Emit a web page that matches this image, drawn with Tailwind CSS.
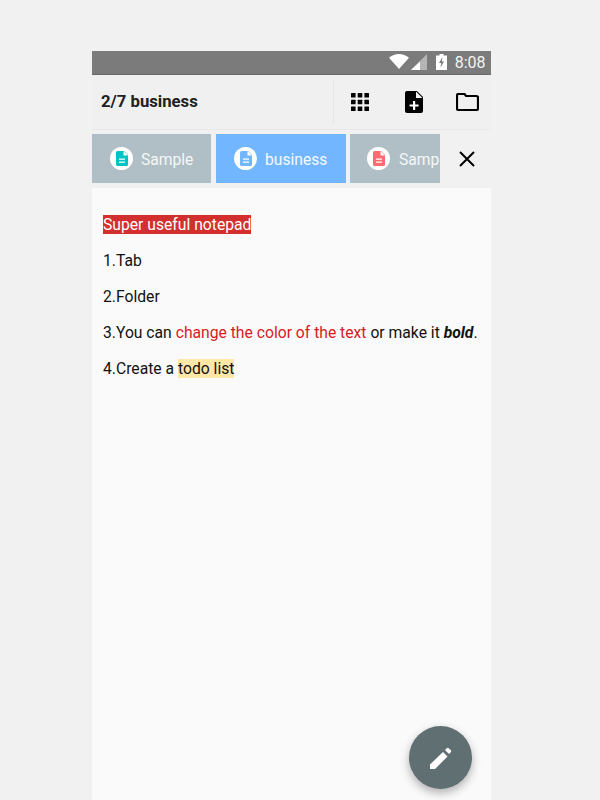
<!DOCTYPE html>
<html lang="en">
<head>
  <meta charset="UTF-8">
  <title>Notepad</title>
  <script src="https://cdn.jsdelivr.net/npm/@tailwindcss/browser@4"></script>
</head>
<body class="bg-[#f1f1f1] h-[800px] overflow-hidden font-['Roboto',sans-serif]">
  <div class="ml-[92px] mt-[51px] w-[399px] h-[749px] flex flex-col relative">

    <!-- status bar -->
    <div class="h-[24px] bg-[#7b7b7b] border-b border-[#6a6a6a] flex items-center justify-end text-white">
      <svg class="w-[20px] h-[15px] mb-[2px]" viewBox="0 0 20 15"><path d="M0 3.700C2.800 1.400 6.200 0 10 0s7.200 1.400 10 3.700L10 15z" fill="#fff"/></svg>
      <svg class="w-[16px] h-[16px] ml-[2px] mb-[2px]" viewBox="0 0 16 16"><path d="M16 0v16H0z" fill="#b5b5b5"/><path d="M9 7.500V16H0z" fill="#fff"/></svg>
      <svg class="w-[11px] h-[16px] ml-[9px] mb-[2px]" viewBox="0 0 11 16"><path d="M3.500 0h4v1.500H11V16H0V1.500h3.500z" fill="#fff"/><path d="M6.500 3 3 9h2.200L4.500 13.500 8 7.500H5.800z" fill="#7b7b7b"/></svg>
      <span class="text-[16px] ml-[8px] mr-[5.500px] leading-none text-[#f4f4f4]">8:08</span>
    </div>

    <!-- toolbar -->
    <div class="h-[55px] bg-[#f0f0f0] border-b border-[#e8e8e8] flex items-center">
      <div class="flex-1 pl-[9px] text-[16.700px] font-bold text-[#212121]">2/7 business</div>
      <div class="w-px h-[44px] bg-[#e6e6e6]"></div>
      <div class="w-[157px] flex items-center">
        <svg class="w-[18px] h-[18px] ml-[17px]" viewBox="0 0 18 18" fill="#000">
          <rect width="4.600" height="4.600" rx=".5"/><rect x="6.700" width="4.600" height="4.600" rx=".5"/><rect x="13.400" width="4.600" height="4.600" rx=".5"/>
          <rect y="6.700" width="4.600" height="4.600" rx=".5"/><rect x="6.700" y="6.700" width="4.600" height="4.600" rx=".5"/><rect x="13.400" y="6.700" width="4.600" height="4.600" rx=".5"/>
          <rect y="13.400" width="4.600" height="4.600" rx=".5"/><rect x="6.700" y="13.400" width="4.600" height="4.600" rx=".5"/><rect x="13.400" y="13.400" width="4.600" height="4.600" rx=".5"/>
        </svg>
        <svg class="w-[18px] h-[22px] ml-[36px]" viewBox="0 0 18 22"><path d="M2 0h10l6 6v14a2 2 0 0 1-2 2H2a2 2 0 0 1-2-2V2a2 2 0 0 1 2-2z" fill="#000"/><path d="M11 .5V7h6.500z" fill="#f0f0f0"/><path d="M8 10h2.200v3.400h3.400v2.200h-3.400V19H8v-3.400H4.600v-2.200H8z" fill="#fff"/></svg>
        <svg class="w-[23px] h-[18px] ml-[33px]" viewBox="0 0 23 18" fill="none"><path d="M2.500 1h6l1.500 2h10.500a1.500 1.500 0 0 1 1.500 1.500v11a1.500 1.500 0 0 1-1.500 1.500h-18A1.500 1.500 0 0 1 1 15.500v-13A1.500 1.500 0 0 1 2.500 1z" stroke="#000" stroke-width="2.200"/></svg>
      </div>
    </div>

    <!-- tabs -->
    <div class="h-[58px] pt-[4px] bg-[#f1f1f1] flex items-start">
      <div class="w-[119px] h-[49px] bg-[#b0bec5] flex items-center pl-[18px] text-[#f5f7f8] text-[15.650px]">
        <div class="w-[23px] h-[23px] rounded-full bg-white flex items-center justify-center">
          <svg class="w-[12px] h-[15px]" viewBox="0 0 12 15"><path d="M1.500 0H8l4 4v9.500a1.500 1.500 0 0 1-1.500 1.500h-9A1.500 1.500 0 0 1 0 13.500v-12A1.500 1.500 0 0 1 1.500 0z" fill="#00c4c4"/><path d="M7.500 0v4.500H12z" fill="#fff"/><path d="M3 7.500h6v1.300H3zM3 10.500h6v1.300H3z" fill="#fff"/></svg>
        </div>
        <span class="ml-[8px] mt-[2px]">Sample</span>
      </div>
      <div class="w-[130px] h-[49px] ml-[5px] bg-[#72b6ff] flex items-center pl-[18px] text-[#f5faff] text-[15.650px]">
        <div class="w-[23px] h-[23px] rounded-full bg-white flex items-center justify-center">
          <svg class="w-[12px] h-[15px]" viewBox="0 0 12 15"><path d="M1.500 0H8l4 4v9.500a1.500 1.500 0 0 1-1.500 1.500h-9A1.500 1.500 0 0 1 0 13.500v-12A1.500 1.500 0 0 1 1.500 0z" fill="#72b6ff"/><path d="M7.500 0v4.500H12z" fill="#fff"/><path d="M3 7.500h6v1.300H3zM3 10.500h6v1.300H3z" fill="#fff"/></svg>
        </div>
        <span class="ml-[8px] mt-[2px]">business</span>
      </div>
      <div class="w-[90px] h-[49px] ml-[4px] bg-[#b0bec5] flex items-center pl-[17px] text-[#f5f7f8] text-[15.650px] overflow-hidden whitespace-nowrap">
        <div class="w-[23px] h-[23px] shrink-0 rounded-full bg-white flex items-center justify-center">
          <svg class="w-[12px] h-[15px]" viewBox="0 0 12 15"><path d="M1.500 0H8l4 4v9.500a1.500 1.500 0 0 1-1.500 1.500h-9A1.500 1.500 0 0 1 0 13.500v-12A1.500 1.500 0 0 1 1.500 0z" fill="#ff6b70"/><path d="M7.500 0v4.500H12z" fill="#fff"/><path d="M3 7.500h6v1.300H3zM3 10.500h6v1.300H3z" fill="#fff"/></svg>
        </div>
        <span class="ml-[9px] mt-[2px]">Sample</span>
      </div>
      <div class="flex-1 h-[49px] flex items-center justify-center">
        <svg class="w-[16px] h-[16px] ml-[3px]" viewBox="0 0 16 16"><path d="M1 1l14 14M15 1 1 15" stroke="#000" stroke-width="2"/></svg>
      </div>
    </div>

    <!-- note -->
    <div class="flex-1 bg-[#fafafa] pt-[27px] pl-[11px] text-[15.700px] leading-[20px] text-[#111] flex flex-col gap-[16px]">
      <p><span class="bg-[#d32f2f] text-white">Super useful notepad</span></p>
      <p>1.Tab</p>
      <p>2.Folder</p>
      <p class="whitespace-nowrap">3.You can <span class="text-[#d81b23]">change the color of the text</span> or make it <b><i>bold</i></b>.</p>
      <p>4.Create a <span class="bg-[#ffe7a8]">todo list</span></p>
    </div>

    <!-- fab -->
    <div class="absolute left-[317px] top-[675px] w-[63px] h-[63px] rounded-full bg-[#607072] shadow-[0_4px_10px_rgba(0,0,0,0.3)] flex items-center justify-center">
      <svg class="w-[22px] h-[22px]" viewBox="0 0 22 22"><path d="M0 22v-4.500L13 5l4.500 4.500L5 22z" fill="#fff"/><path d="M15 3l1.800-1.800a1.400 1.400 0 0 1 2 0l2 2a1.400 1.400 0 0 1 0 2L19 7z" fill="#fff"/></svg>
    </div>
  </div>
</body>
</html>
